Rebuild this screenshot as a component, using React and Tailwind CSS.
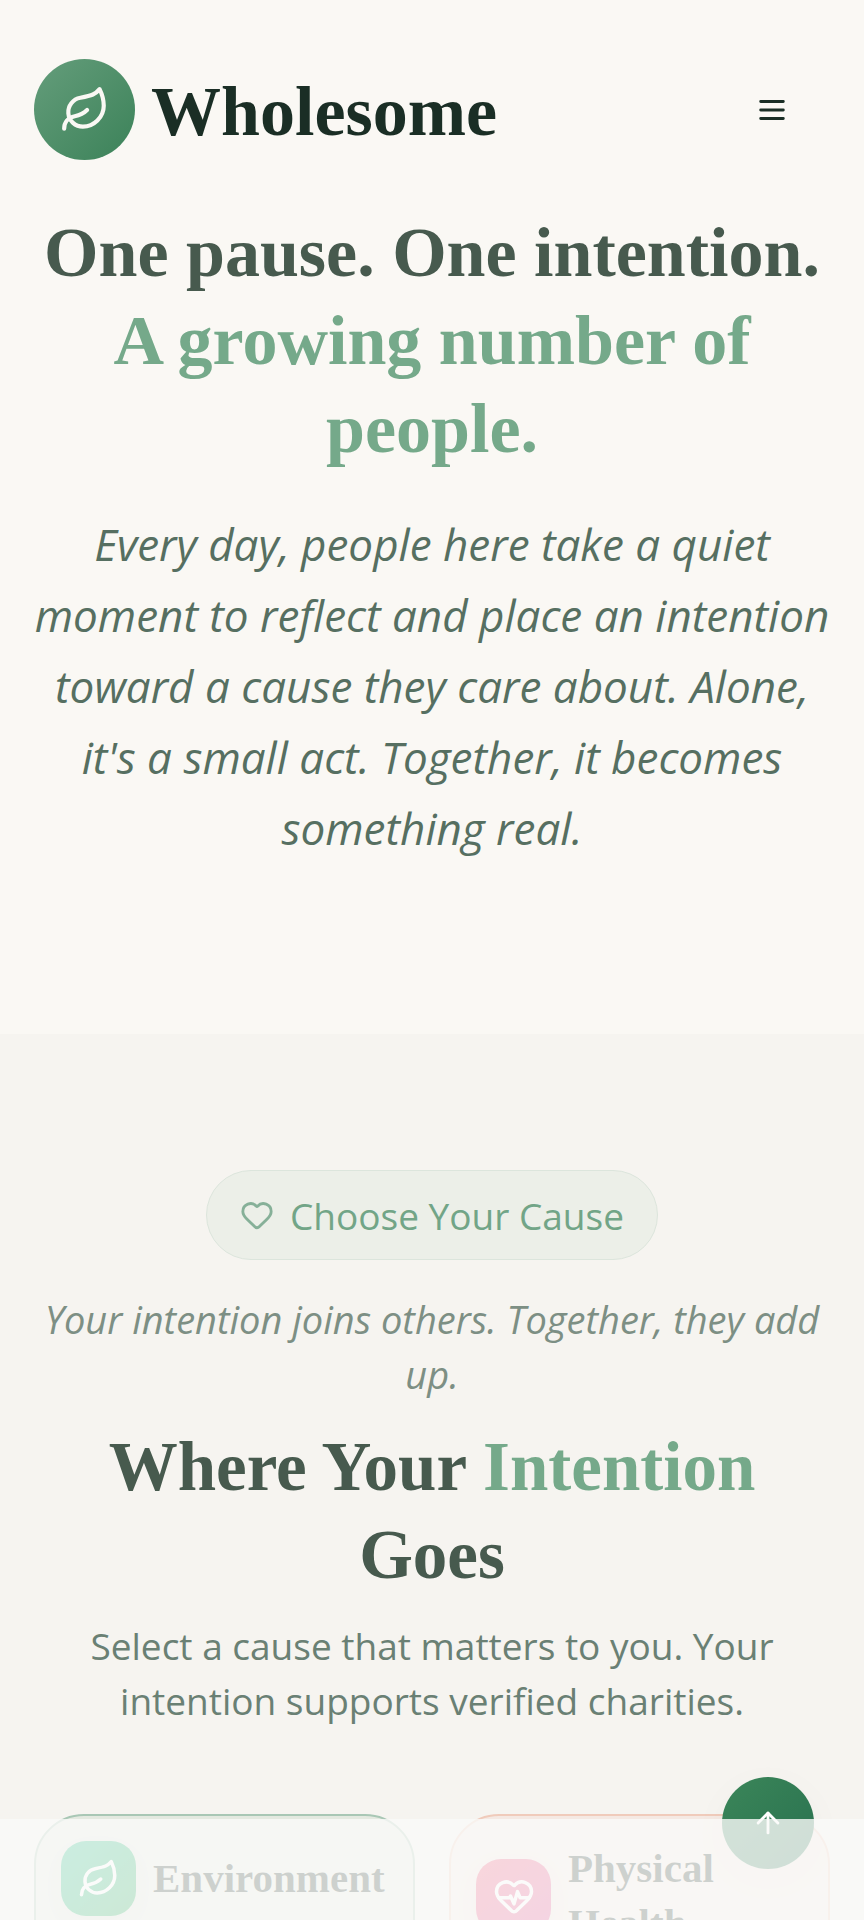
import { ArrowUp, Heart, HeartPulse, Leaf } from "lucide-react";

const causes = [
  {
    name: "Environment",
    icon: Leaf,
    card: "border-[#a9c7b5] bg-[#e4e9e0]",
    badge: "from-[#10b981] to-[#16a34a]",
  },
  {
    name: "Physical Health",
    icon: HeartPulse,
    card: "border-[#f0cbbb] bg-[#f5e9e3]",
    badge: "from-[#f04668] to-[#db3c8a]",
  },
];

function MenuIcon() {
  return (
    <svg
      viewBox="0 0 24 24"
      className="size-[34px]"
      fill="none"
      stroke="currentColor"
      strokeWidth="2"
      strokeLinecap="round"
      aria-hidden="true"
    >
      <path d="M4 6h16M4 12h16M4 18h16" />
    </svg>
  );
}

function Header() {
  return (
    <header className="flex items-center justify-between pt-[59px] pr-[75px] pl-[34px]">
      <a href="#home" className="flex items-center gap-4">
        <span className="flex size-[101px] items-center justify-center rounded-full bg-linear-to-br from-[#649d7b] to-[#3b8259] text-[#faf8f4]">
          <Leaf className="size-[50px]" />
        </span>
        <span className="pt-1 font-['Liberation_Serif',serif] text-[70px] leading-[88px] font-bold text-[#1a2e25]">
          Wholesome
        </span>
      </a>
      <button type="button" aria-label="Open menu" className="text-[#1a2e25]">
        <MenuIcon />
      </button>
    </header>
  );
}

function Hero() {
  return (
    <section className="px-[34px] pt-[49px] pb-[170px] text-center">
      <h1 className="font-['Liberation_Serif',serif] text-[70px] leading-[88px] font-bold text-[#475a4e]">
        One pause. One intention.
        <span className="block text-[#75a98a]">A growing number of people.</span>
      </h1>
      <p className="mt-9 text-[44px] leading-[71px] text-[#566f61] italic">
        Every day, people here take a quiet moment to reflect and place an
        intention toward a cause they care about. Alone, it's a small act.
        Together, it becomes something real.
      </p>
    </section>
  );
}

function CauseCard({ name, icon: Icon, card, badge }) {
  return (
    <a
      href="#causes"
      className={`flex min-h-[240px] items-start rounded-[50px] border-2 p-[25px] ${card}`}
    >
      <span className="flex min-h-[75px] items-center gap-[17px]">
        <span
          className={`flex size-[75px] shrink-0 items-center justify-center rounded-[25px] bg-linear-to-br text-white shadow-[0_8px_24px_rgba(60,30,20,0.06)] ${badge}`}
        >
          <Icon className="size-[42px]" />
        </span>
        <span className="font-['Liberation_Serif',serif] text-[41px] leading-[55px] font-bold text-[#1a2e25]">
          {name}
        </span>
      </span>
    </a>
  );
}

function Causes() {
  return (
    <section
      id="causes"
      className="bg-[#f6f4f0] px-[34px] pt-[136px] text-center text-[37px] leading-[55px]"
    >
      <div className="inline-flex h-[90px] items-center gap-4 rounded-full border border-[#dce5dc] bg-[#ecefe8] px-[33px] font-medium text-[#72a587]">
        <Heart className="size-[34px] text-[#86b098]" />
        <span>Choose Your Cause</span>
      </div>
      <p className="mt-8 text-[38px] text-[#7d8f84] italic">
        Your intention joins others. Together, they add up.
      </p>
      <h2 className="mt-[21px] font-['Liberation_Serif',serif] text-[69px] leading-[88px] font-bold text-[#475a4e]">
        Where Your <span className="text-[#75a98a]">Intention</span> Goes
      </h2>
      <p className="mt-[19px] px-4 text-[#6a8074]">
        Select a cause that matters to you. Your intention supports verified
        charities.
      </p>
      <div className="mt-[86px] grid grid-cols-2 gap-[34px] text-left">
        {causes.map((cause) => (
          <CauseCard key={cause.name} {...cause} />
        ))}
      </div>
    </section>
  );
}

function App() {
  return (
    <div className="h-screen overflow-hidden bg-[#faf8f4] font-['Open_Sans',sans-serif]">
      <Header />
      <main>
        <Hero />
        <Causes />
      </main>
      <button
        type="button"
        aria-label="Back to top"
        className="fixed right-[50px] bottom-[51px] flex size-[92px] items-center justify-center rounded-full bg-linear-to-br from-[#3b8659] to-[#28704f] text-white shadow-[0_10px_40px_rgba(60,30,20,0.03)]"
      >
        <ArrowUp className="size-[34px]" />
      </button>
      <div className="pointer-events-none fixed inset-x-0 bottom-0 h-[101px] bg-[#fafaf9]/80" />
    </div>
  );
}

export default App;
